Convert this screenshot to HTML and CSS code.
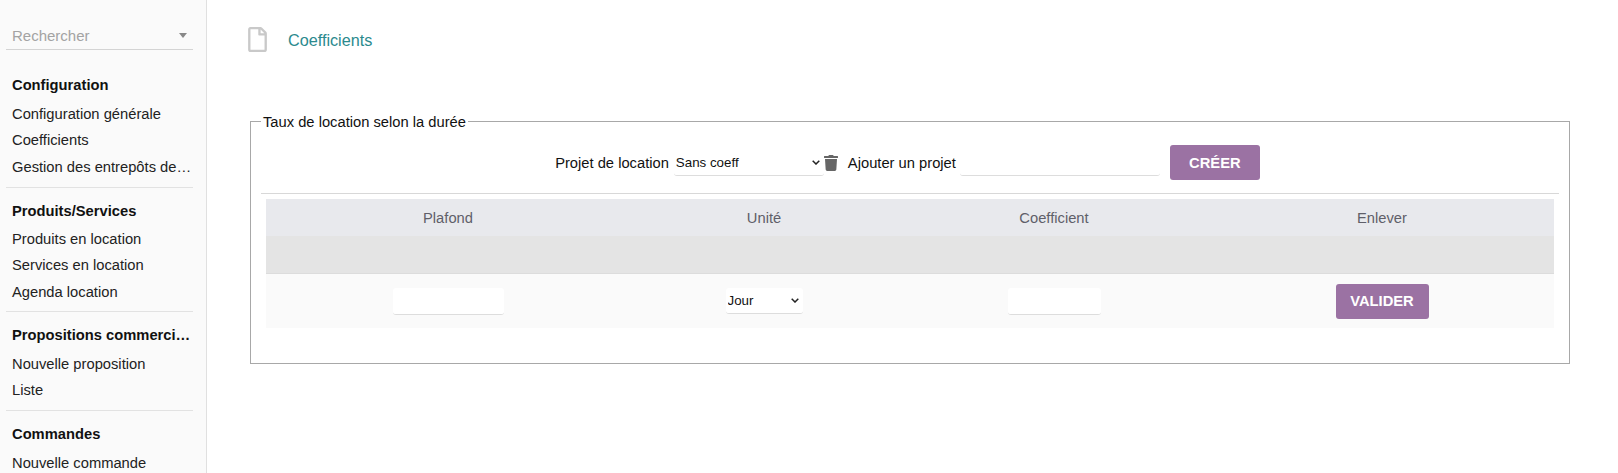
FILE: index.html
```html
<!DOCTYPE html>
<html lang="fr">
<head>
<meta charset="utf-8">
<title>Coefficients</title>
<link rel="stylesheet" href="styles.css">
</head>
<body>
<div class="app">
  <aside class="sidebar">
    <div class="search"><span class="search-text">Rechercher</span><span class="caret"></span></div>
    <nav>
      <section class="group group-first">
        <h3>Configuration</h3>
        <a>Configuration générale</a>
        <a>Coefficients</a>
        <a>Gestion des entrepôts de location</a>
      </section>
      <section class="group">
        <h3>Produits/Services</h3>
        <a>Produits en location</a>
        <a>Services en location</a>
        <a>Agenda location</a>
      </section>
      <section class="group">
        <h3>Propositions commerciales</h3>
        <a>Nouvelle proposition</a>
        <a>Liste</a>
      </section>
      <section class="group">
        <h3>Commandes</h3>
        <a>Nouvelle commande</a>
      </section>
    </nav>
  </aside>
  <main class="main">
    <header class="title">
      <svg class="file-icon" viewBox="0 0 384 512"><path d="M369.9 97.9L286 14C277 5 264.8-.1 252.1-.1H48C21.5 0 0 21.5 0 48v416c0 26.5 21.5 48 48 48h288c26.5 0 48-21.5 48-48V131.9c0-12.7-5.1-25-14.1-34zM332.1 128H256V51.9l76.1 76.1zM48 464V48h160v104c0 13.3 10.7 24 24 24h104v288H48z"/></svg>
      <span>Coefficients</span>
    </header>
    <fieldset class="panel">
      <legend>Taux de location selon la durée</legend>
      <div class="toolbar">
        <label>Projet de location</label>
        <select class="select-project"><option>Sans coeff</option></select>
        <svg class="trash-icon" viewBox="0 0 448 512"><path d="M432 32H312l-9.4-18.7A24 24 0 0 0 281.1 0H166.8a23.72 23.72 0 0 0-21.4 13.3L136 32H16A16 16 0 0 0 0 48v32a16 16 0 0 0 16 16h416a16 16 0 0 0 16-16V48a16 16 0 0 0-16-16zM53.2 467a48 48 0 0 0 47.9 45h245.8a48 48 0 0 0 47.9-45L416 128H32z"/></svg>
        <label class="add-label">Ajouter un projet</label>
        <input class="input-project" type="text">
        <button class="btn btn-create">CRÉER</button>
      </div>
      <hr class="rule">
      <table class="rates">
        <colgroup>
          <col class="c1"><col class="c2"><col class="c3"><col class="c4">
        </colgroup>
        <thead>
          <tr><th>Plafond</th><th>Unité</th><th>Coefficient</th><th>Enlever</th></tr>
        </thead>
        <tbody>
          <tr class="empty-row"><td colspan="4"></td></tr>
          <tr class="form-row">
            <td><input class="input-ceiling" type="text"></td>
            <td><select class="select-unit"><option>Jour</option></select></td>
            <td><input class="input-coef" type="text"></td>
            <td><button class="btn btn-validate">VALIDER</button></td>
          </tr>
        </tbody>
      </table>
    </fieldset>
  </main>
</div>
</body>
</html>
```
FILE: styles.css
```css
* { box-sizing: border-box; }
html, body { margin: 0; height: 100%; overflow: hidden; background: #fff; }
body { font-family: "Liberation Sans", Arial, sans-serif; font-size: 14.72px; color: #111; }
.app { display: flex; height: 473px; overflow: hidden; }

.sidebar {
  width: 207px; flex: none; height: 473px; overflow: hidden;
  background: #fafafa; border-right: 1px solid #e0e0e0; padding: 24px 13px 0 6px;
}
.search {
  display: flex; align-items: center; justify-content: space-between;
  height: 26px; padding: 0 6px 2px; border-bottom: 1px solid #d4d4d4; color: #a3a3a3; font-size: 15px;
}
.caret { width: 0; height: 0; border: 4px solid transparent; border-top: 5px solid #888; border-bottom: 0; }
.group { padding: 11px 0 6.5px; border-top: 1px solid #e2e2e2; }
.group-first { border-top: 0; padding-top: 23.2px; }
.group h3 {
  margin: 0 0 3.5px; padding-left: 6px; height: 24px; line-height: 24px; font-size: 14.72px; font-weight: 700;
  white-space: nowrap; overflow: hidden; text-overflow: ellipsis; color: #111;
}
.group-first h3 { margin-bottom: 4px; }
.group a {
  display: block; padding-left: 6px; height: 26.3px; line-height: 26.3px;
  white-space: nowrap; overflow: hidden; text-overflow: ellipsis; color: #222;
}

.main { flex: 1; min-width: 0; padding: 27px 48px 0 43px; }
.title { display: flex; align-items: center; gap: 21px; height: 25px; color: #2b8a8e; font-size: 16.2px; margin-left: -2px; }
.file-icon { width: 19px; height: 25px; fill: #c9c9c9; }
.title span { padding-top: 2px; }

.panel {
  margin: 60px 0 0; padding: 14px 10px 0; height: 252px;
  border: 1px solid #a8a8a8; min-width: 0;
}
.panel legend { padding: 2px 2px 0; margin-left: 0; font-size: 14.72px; line-height: 17px; color: #111; }
.toolbar { display: flex; justify-content: center; align-items: center; height: 35px; padding-right: 5px; }
.toolbar label { white-space: nowrap; }
.select-project, .select-unit {
  appearance: none; -webkit-appearance: none;
  font-family: "Liberation Sans", Arial, sans-serif; font-size: 13.33px; color: #111;
  background: #fff url("data:image/svg+xml,%3Csvg xmlns='http://www.w3.org/2000/svg' width='8' height='5' viewBox='0 0 8 5'%3E%3Cpath d='M.7.7 4 4l3.3-3.3' fill='none' stroke='%23222' stroke-width='1.5'/%3E%3C/svg%3E") no-repeat right 4px center;
  border: 0; border-bottom: 1px solid #ddd; outline: 0; border-radius: 3px; padding: 0 14px 0 2px;
}
.select-project { width: 150px; height: 26px; margin: 0 0 0 5px; }
.trash-icon { width: 14px; height: 16px; fill: #666; margin-right: 10px; flex: none; }
.input-project { width: 200px; height: 26px; margin: 0 10px 0 4px; }
input { background: #fff; border: 0; border-bottom: 1px solid #ddd; border-radius: 3px; outline: 0; padding: 0; }
.btn {
  font-family: "Liberation Sans", Arial, sans-serif; font-size: 14.72px; font-weight: 700;
  color: #fff; background: #9b72a3; border: 0; border-radius: 3px; height: 35px; padding: 0;
}
.btn-create { width: 90px; }
.btn-validate { width: 93px; display: block; margin: 0 auto; }

.rule { margin: 13px 0 0; border: 0; border-top: 1px solid #d8d8d8; }
.rates { width: 1288px; margin: 5px 0 0 5px; border-collapse: collapse; table-layout: fixed; }
.c1 { width: 364px; } .c2 { width: 268px; } .c3 { width: 312px; } .c4 { width: 344px; }
.rates th { height: 37px; background: #e8e9ed; color: #5f5f69; font-weight: 400; font-size: 14.72px; text-align: center; padding: 0; }
.empty-row td { height: 37px; background: #e4e4e4; border-bottom: 1px solid #dcdcdc; padding: 0; }
.form-row td { height: 55px; background: #fafafa; text-align: center; padding: 1px 0 0; }
.input-ceiling { width: 111px; height: 27px; display: block; margin: 0 auto; }
.input-coef { width: 93px; height: 27px; display: block; margin: 0 auto; }
.select-unit { width: 77px; height: 26px; display: block; margin: 0 auto; }
```
